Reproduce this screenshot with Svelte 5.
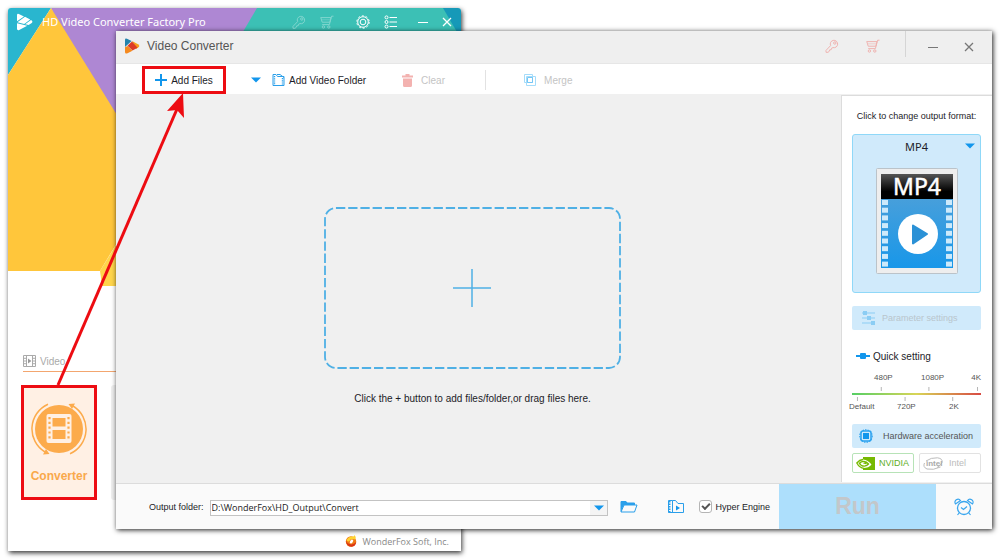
<script>
	let outputFolder = 'D:\\WonderFox\\HD_Output\\Convert'
	let hyperEngine = true

	const perforations = [0, 1, 2, 3, 4, 5, 6, 7, 8]
	const upperMarks = ['480P', '1080P', '4K']
	const lowerMarks = ['Default', '720P', '2K']
</script>

{#snippet keyIcon()}
	<svg class="icon" width="14" height="14" viewBox="0 0 14 14">
		<path d="M5.6 6.6A3.7 3.7 0 1 1 8 8.6L6.6 9.2 6.2 10.7 4.6 10.9 4.2 12.4 3 13.3 1 13.3 1 11.4Z" />
		<circle cx="9.8" cy="4" r="1.2" />
	</svg>
{/snippet}

{#snippet cartIcon()}
	<svg class="icon" width="14" height="14" viewBox="0 0 14 14">
		<path d="M13.5 1.2H11.6L9.4 9.6H2.2M.6 2.6H11L9.9 7.2H2.2L.8 2.6" />
		<path d="M2 4.8H10.4" stroke-width=".6" />
		<circle cx="3.4" cy="12" r="1.2" />
		<circle cx="8.8" cy="12" r="1.2" />
	</svg>
{/snippet}

{#snippet closeIcon()}
	<svg class="icon" width="10" height="10" viewBox="0 0 10 10"><path stroke-width="1.3" d="M1 1 9 9M9 1 1 9" /></svg>
{/snippet}

{#snippet minimizeIcon()}
	<svg class="icon" width="10" height="10" viewBox="0 0 10 10"><path d="M0 5.5H10" /></svg>
{/snippet}

{#snippet downArrow()}
	<svg class="arrow" width="10" height="6" viewBox="0 0 10 6"><path d="M0 .5H10L5 5.5Z" /></svg>
{/snippet}

<div class="desktop">
	<section class="launcher">
		<div class="hero">
			<svg class="heroArt" viewBox="0 0 453 278" preserveAspectRatio="xMinYMin slice">
				<path fill="#ae87d3" d="M43 0H250L130 200Z" />
				<path fill="#3cc0b5" d="M249 0H436L453 29V278H150L110 235Z" />
				<path fill="#1699b8" d="M435 0H453V31Z" />
				<path fill="#29b6cf" d="M0 0H43L0 67Z" />
				<path fill="#ffd54b" d="M92 263 108 237H220V278H94Z" />
				<path fill="#ffc63b" d="M43 0 0 67V263H92L130 200 146 167Z" />
			</svg>
			<header class="launcherBar">
				<svg width="18" height="18" viewBox="0 0 18 18">
					<path fill="#fff" d="M1 2.2Q1 .4 2.8 1L8 3.4 1 8.2ZM9 3.8 14.2 6.4 8.2 11 1.4 9.2ZM15 6.9Q17.6 8.4 15.4 10.2L12.6 12 9.2 11.2ZM1 10.2 11.2 12.8 3.2 17Q1 17.8 1 15.8Z" />
				</svg>
				<h1>HD Video Converter Factory Pro</h1>
				<button class="iconButton faint" aria-label="Register">{@render keyIcon()}</button>
				<button class="iconButton faint" aria-label="Shop">{@render cartIcon()}</button>
				<button class="iconButton gear" aria-label="Settings">
					<svg class="icon" width="14" height="14" viewBox="0 0 14 14">
						<circle cx="7" cy="7" r="5.3" />
						<circle cx="7" cy="7" r="6.2" stroke-dasharray="2 1.9" />
						<circle cx="7" cy="7" r="2.8" />
					</svg>
				</button>
				<button class="iconButton" aria-label="Menu">
					<svg class="icon" width="14" height="14" viewBox="0 0 14 14">
						<circle cx="2.5" cy="2.4" r="1.5" /><circle cx="2.5" cy="7" r="1.5" /><circle cx="2.5" cy="11.6" r="1.5" />
						<path d="M5.5 2.5H13M5.5 7H13M5.5 11.5H13" />
					</svg>
				</button>
				<button class="iconButton minimize" aria-label="Minimize">{@render minimizeIcon()}</button>
				<button class="iconButton" aria-label="Close">{@render closeIcon()}</button>
			</header>
		</div>

		<div class="category">
			<svg width="13" height="12" viewBox="0 0 13 12" fill="none" stroke="#aaa">
				<path d="M.5 .5H12.5V11.5H.5ZM3.5 .5V11.5M9.5 .5V11.5M.5 3.3H3.5M.5 6H3.5M.5 8.7H3.5M9.5 3.3H12.5M9.5 6H12.5M9.5 8.7H12.5" />
				<path fill="#999" stroke="none" d="M5 3.6 8.4 6 5 8.4Z" />
			</svg>
			<h2>Video</h2>
		</div>

		<div class="tools">
			<button class="tool active">
				<svg width="56" height="52" viewBox="0 0 56 52">
					<circle cx="28" cy="26" r="24" fill="#fcab4c" />
					<path fill="none" stroke="#fcab4c" stroke-width="1.5" d="M17 1.2A27 27 0 0 0 14 49M39 50.8A27 27 0 0 0 42 3" />
					<path fill="#fcab4c" d="M12 51.5 18.5 51 15 46ZM44 .5 37.5 1 41 6Z" />
					<rect x="15.5" y="11" width="25" height="29" rx="2" fill="#fff0e4" />
					<path fill="#fcab4c" d="M21.5 15H34.5V23.5H21.5ZM21.5 27H34.5V36H21.5Z" />
					<path stroke="#fcab4c" stroke-width="2.2" stroke-dasharray="2.2 2.6" d="M18.5 14V38M37.5 14V38" />
				</svg>
				<span>Converter</span>
			</button>
			<button class="tool" aria-label="Downloader"></button>
		</div>

		<footer class="company">
			<svg width="12" height="12" viewBox="0 0 12 12">
				<circle cx="6" cy="6.5" r="5.2" fill="#f07a13" />
				<path fill="#d93616" d="M1 5Q1 11.6 6.5 11.7 10.5 11.5 11.3 7 8 10.5 4.5 9 1.5 8 1 5Z" />
				<path fill="#ffd331" d="M1.5 5Q4 1 7.500 1.500 9.500 1.500 9.500 0 12 3.500 9.500 4.500 6 3 4 6.500 2 6.500 1.500 5Z" />
				<ellipse cx="6.5" cy="6.5" rx="1.4" ry="2.2" fill="#fff" transform="rotate(35 6.5 6.5)" />
			</svg>
			WonderFox Soft, Inc.
		</footer>
	</section>

	<section class="converter">
		<header class="titleBar">
			<svg width="16" height="16" viewBox="0 0 16 16">
				<path fill="#2383ad" d="M1 2Q1 0 3 .8L7.6 3 1 9Z" />
				<path fill="#f6a01c" d="M8 3 14 6.2Q16.5 8 14.2 9.6L12 11Z" />
				<path fill="#dc3b26" d="M8 3.6 13.5 9.8 8.5 12.5 3.5 7.8Z" />
				<path fill="#f58a1f" d="M1 9.2 3.6 8 8.5 12.8 3 15.4Q1 16 1 14Z" />
			</svg>
			<h1>Video Converter</h1>
			<button class="iconButton pink" aria-label="Register">{@render keyIcon()}</button>
			<button class="iconButton pink shop" aria-label="Shop">{@render cartIcon()}</button>
			<div class="controls">
				<button class="iconButton" aria-label="Minimize">{@render minimizeIcon()}</button>
				<button class="iconButton" aria-label="Close">{@render closeIcon()}</button>
			</div>
		</header>

		<nav class="toolbar">
			<button class="addFiles">
				<svg width="12" height="12" viewBox="0 0 12 12"><path stroke="#1296ec" stroke-width="2" d="M6 0V12M0 6H12" /></svg>
				Add Files
			</button>
			<button class="iconButton more" aria-label="More ways to add">{@render downArrow()}</button>
			<button>
				<svg width="13" height="14" viewBox="0 0 13 14" fill="none" stroke="#2a9fea">
					<path d="M1 1.5H4L5.5 3.5H12V12.5H1ZM5 1.5H8L12 4.500" />
					<path d="M2.5 3V12.5M10.500 5V12.500" stroke-width="1.4" stroke-dasharray="1.2 1" />
				</svg>
				Add Video Folder
			</button>
			<button class="clear" disabled>
				<svg width="11" height="13" viewBox="0 0 11 13" fill="#f3b2b0"><path d="M3.5 0H7.5V1.5H11V3.5H0V1.5H3.5ZM1 4.5H10V11.5Q10 13 8.5 13H2.5Q1 13 1 11.5Z" /></svg>
				Clear
			</button>
			<button class="merge" disabled>
				<svg width="12" height="12" viewBox="0 0 12 12" fill="none" stroke="#a5dcfa">
					<path d="M.5 .5H8.5V8.5H.5ZM2.5 2.5H11.5V11.5H2.5Z" />
					<path stroke="#75c6f5" d="M3.5 3.5H8.5V8.5H3.5Z" />
				</svg>
				Merge
			</button>
		</nav>

		<div class="workspace">
			<main>
				<button class="dropZone" aria-label="Add files or folder">
					<svg width="297" height="162" viewBox="0 0 297 162" fill="none" stroke="#4fb0e5">
						<rect x="1" y="1" width="295" height="160" rx="11" stroke-width="1.8" stroke-dasharray="9.3 2.9" />
						<path stroke-width="1.5" d="M129 81H167M148 62V100" />
					</svg>
				</button>
				<p>Click the + button to add files/folder,or drag files here.</p>
			</main>

			<aside>
				<p>Click to change output format:</p>
				<button class="format">
					<span class="formatName">MP4 {@render downArrow()}</span>
					<svg width="82" height="106" viewBox="0 0 82 106">
						<defs>
							<linearGradient id="label" x2="0" y2="1"><stop stop-color="#555" /><stop offset=".7" stop-color="#000" /></linearGradient>
							<linearGradient id="film" x2="0" y2="1"><stop stop-color="#479fdb" /><stop offset="1" stop-color="#1897e9" /></linearGradient>
						</defs>
						<rect x=".5" y=".5" width="81" height="105" rx="1" fill="#eee" stroke="#bbc3c9" />
						<rect x="5" y="6" width="72" height="25" fill="url(#label)" />
						<rect x="5" y="31" width="72" height="69" fill="url(#film)" />
						{#each perforations as i}
							<rect x="6" y={32 + i * 7.7} width="6" height="5" fill="#cdeafb" />
							<rect x="70" y={32 + i * 7.7} width="6" height="5" fill="#cdeafb" />
						{/each}
						<text x="41" y="27" text-anchor="middle" class="formatArt">MP4</text>
						<circle cx="42" cy="66" r="20" fill="#fff" />
						<path d="M37 57.5 51 66 37 75.5Z" fill="#2b91d6" stroke="#2b91d6" stroke-width="2" stroke-linejoin="round" />
					</svg>
				</button>

				<button class="wide parameters" disabled>
					<svg width="14" height="14" viewBox="0 0 14 14" fill="#8bcdf4" stroke="#8bcdf4">
						<path d="M0 2H13M0 7H13M0 12H13" /><path stroke="none" d="M1 0H5V4H1ZM5 5H9V9H5ZM9 10H13V14H9Z" />
					</svg>
					Parameter settings
				</button>

				<h2>
					<svg width="14" height="6" viewBox="0 0 14 6" fill="#1296ec"><path d="M0 2H14V4H0Z" /><rect x="4" width="6" height="6" rx="1" /></svg>
					Quick setting
				</h2>
				<div class="scale">
					<div class="marks upper">
						{#each upperMarks as mark}<span>{mark}</span>{/each}
					</div>
					<svg width="100%" height="14" viewBox="0 0 130 14" preserveAspectRatio="none">
						<defs>
							<linearGradient id="quality"><stop stop-color="#55cf65" /><stop offset=".5" stop-color="#d8d557" /><stop offset="1" stop-color="#d84a43" /></linearGradient>
						</defs>
						<rect y="6" width="130" height="2" fill="url(#quality)" />
						<path stroke="#b5b5b5" d="M29.5 0V4M77.5 0V4M126.5 0V4M5.5 10V14M53.5 10V14M101.5 10V14" />
					</svg>
					<div class="marks lower">
						{#each lowerMarks as mark}<span>{mark}</span>{/each}
					</div>
				</div>

				<button class="wide">
					<svg width="14" height="14" viewBox="0 0 14 14" fill="none" stroke="#2da3ef">
						<rect x="2" y="2" width="10" height="10" rx="2" stroke-width="1.5" />
						<circle cx="7" cy="7" r="6.2" stroke-width="1.2" stroke-dasharray="1.5 1" />
						<rect x="4" y="4" width="6" height="6" fill="#1296ec" stroke="none" />
					</svg>
					Hardware acceleration
				</button>
				<div class="vendors">
					<button class="vendor nvidia">
						<svg width="19" height="13" viewBox="0 0 19 13">
							<path fill="#76b900" d="M7 0H19V13H7V11Q13 11 15.5 7.5 12 3 7 2.5Z" />
							<path fill="none" stroke="#76b900" stroke-width="1.3" d="M7 2.5Q3.5 2.8 .8 6 3.5 11 8 11.3M8 4.4Q5.2 4.3 3.4 6.3 5.3 9.3 8.5 9.1 11 8.8 12.5 7 10.5 4.7 8 4.4ZM7.5 6.3Q9.5 5.5 10.2 7" />
						</svg>
						NVIDIA
					</button>
					<button class="vendor intel" disabled>
						<svg width="20" height="13" viewBox="0 0 20 13">
							<path fill="none" stroke="#bbb" d="M3 4Q8 .4 14.5 .8 20 1.6 19 5.5 18 8.5 14 10.5M17.5 10Q10 13.5 4 12 -.5 10 1.5 6" />
							<text x="3" y="9" class="intelArt">intel</text>
						</svg>
						Intel
					</button>
				</div>
			</aside>
		</div>

		<footer class="output">
			<label for="outputFolder">Output folder:</label>
			<div class="combo">
				<input id="outputFolder" type="text" bind:value={outputFolder} />
				<button class="iconButton" aria-label="Recent folders">{@render downArrow()}</button>
			</div>
			<button class="iconButton" aria-label="Choose output folder">
				<svg width="18" height="13" viewBox="0 0 18 13" fill="none" stroke="#2a9fea">
					<path d="M1 11.5V1.5H5.5L7 3H14.5V5M1 12 4 5H17L14.5 12Z" />
					<path d="M1 1H6L7.5 3H15V5H4L1 11Z" fill="#2a9fea" stroke="none" />
				</svg>
			</button>
			<button class="iconButton results" aria-label="Open output folder">
				<svg width="18" height="13" viewBox="0 0 18 13" fill="none" stroke="#2a9fea">
					<path d="M5.5 12.5V.5H1.500V12.5H16.5V3.5H11L8.500 .5H5.5" />
					<path d="M2.5 1V13" stroke-width="2" stroke-dasharray="1.5 1" />
					<path d="M9 5.5 13 8 9 10.500Z" fill="#1296ec" stroke="none" />
				</svg>
			</button>
			<label class="hyper">
				<input type="checkbox" bind:checked={hyperEngine} />
				Hyper Engine
			</label>
			<button class="run" disabled>Run</button>
			<button class="schedule" aria-label="Schedule">
				<svg width="20" height="18" viewBox="0 0 20 18" fill="none" stroke="#3aa6ee">
					<circle cx="10" cy="10" r="6.5" stroke-width="1.3" />
					<path stroke-width="1.2" d="M1.5 6A3 3 0 1 1 6.5 2.5ZM18.5 6A3 3 0 1 0 13.5 2.5ZM5.5 14.5 3.5 17M14.5 14.5 16.5 17M7 9.5 9.5 11.5 13 8.5" />
				</svg>
			</button>
		</footer>
	</section>

	<svg class="pointer" width="150" height="300" viewBox="0 0 150 300">
		<path d="M17 292 136 16" stroke="#ed0c12" stroke-width="3" />
		<path d="M142 0 143 25 136 17 126 18Z" fill="#ed0c12" />
	</svg>
</div>

<style>
	:global(body) {
		background-color: #fff;
		font-family: "Liberation Sans", Arial, sans-serif;
		font-size: 10px;
		color: #1c1c28;
	}
	h1, h2, p {
		margin: 0;
		font-weight: normal;
	}
	button {
		display: flex;
		align-items: center;
		padding: 0;
		border: 0;
		background: none;
		color: inherit;
		font: inherit;
		white-space: nowrap;
	}
	svg {
		display: block;
		flex: none;
	}
	.icon {
		fill: none;
		stroke: currentColor;
	}
	.arrow {
		fill: #1296ec;
	}
	.iconButton {
		justify-content: center;
	}
	.desktop {
		position: relative;
		min-height: 100vh;
		overflow: hidden;
	}

	/* launcher window */
	.launcher {
		position: absolute;
		top: 8px;
		left: 8px;
		width: 45.3%;
		background-color: #fff;
		border-radius: 3px 3px 0 0;
		box-shadow: 1px 2px 5px rgba(0, 0, 0, 0.8);
	}
	.hero {
		display: grid;
		height: 278px;
		overflow: hidden;
		border-radius: 3px 3px 0 0;
	}
	.heroArt {
		grid-area: 1 / 1;
		width: 100%;
		height: 278px;
	}
	.launcherBar {
		grid-area: 1 / 1;
		z-index: 1;
		display: flex;
		align-items: center;
		height: 28px;
		padding-left: 8px;
		color: #fff;
	}
	.launcherBar h1 {
		flex: 1;
		margin-left: 8px;
		font-family: "Noto Sans", sans-serif;
		font-size: 11px;
		line-height: 16px;
	}
	.launcherBar .iconButton {
		width: 28px;
	}
	.launcherBar .faint {
		opacity: 0.35;
	}
	.launcherBar .gear {
		margin-left: 8px;
	}
	.launcherBar .minimize {
		width: 20px;
		margin-left: 8px;
	}
	.category {
		display: flex;
		align-items: center;
		gap: 4px;
		height: 20px;
		margin: 65px 15px 0;
		border-bottom: 1px solid #f3a66f;
		color: #aaa;
	}
	.category h2 {
		font-size: 10px;
	}
	.tools {
		display: flex;
		gap: 14px;
		padding: 13px 13px 12px;
	}
	.tool {
		flex-direction: column;
		width: 76px;
		height: 115px;
		padding-top: 15px;
		gap: 14px;
		border-radius: 3px;
		background-color: #efefef;
		box-sizing: border-box;
	}
	.tool.active {
		border: 3px solid #ed0c12;
		border-radius: 0;
		background-color: #fff0e4;
		color: #f9a94c;
		font-size: 12px;
		font-weight: bold;
	}
	.company {
		display: flex;
		align-items: center;
		justify-content: flex-end;
		gap: 5px;
		height: 20px;
		padding: 19px 12px 0 0;
		color: #888;
		font-family: "Open Sans", sans-serif;
		font-size: 9px;
	}

	/* converter window */
	.converter {
		position: absolute;
		top: 31px;
		left: 116px;
		right: 8px;
		background-color: #f0f0f0;
		box-shadow: 1px 1px 5px rgba(0, 0, 0, 0.9);
	}
	.titleBar {
		display: flex;
		align-items: center;
		height: 30px;
		padding: 0 13px 2px 8px;
		border-bottom: 1px solid #e6e6e6;
		background-color: #efefef;
		color: #555;
	}
	.titleBar h1 {
		flex: 1;
		margin-left: 7px;
		font-size: 12px;
	}
	.titleBar .pink {
		color: #efb3b0;
	}
	.titleBar .shop {
		margin: 0 25px 0 27px;
	}
	.controls {
		display: flex;
		gap: 26px;
		height: 20px;
		padding: 6px 5px 0 22px;
		border-left: 1px solid #d5d5d5;
		align-self: flex-start;
		color: #777;
	}
	.toolbar {
		display: flex;
		align-items: center;
		height: 28px;
		padding: 2px 0 0 26px;
		background-color: #fff;
	}
	.toolbar button {
		gap: 4px;
		height: 20px;
	}
	.toolbar .addFiles {
		justify-content: center;
		width: 84px;
		height: 28px;
		border: 3px solid #ed0c12;
		box-sizing: border-box;
	}
	.toolbar .more {
		width: 46px;
		padding-left: 14px;
		box-sizing: border-box;
	}
	.toolbar button:disabled {
		gap: 8px;
		color: #c4c4c4;
	}
	.toolbar .clear {
		width: 84px;
		margin-left: 36px;
		border-right: 1px solid #e2e2e2;
	}
	.toolbar .merge {
		gap: 5px;
		margin-left: 38px;
	}
	.workspace {
		display: grid;
		grid-template-columns: 1fr 151px;
		border-bottom: 1px solid #dcdcdc;
	}
	main {
		display: flex;
		flex-direction: column;
		align-items: center;
		gap: 24px;
		padding: 113px 12px 0 0;
	}
	aside {
		display: flex;
		flex-direction: column;
		height: 387px;
		margin: 1px 0;
		padding: 14px 11px 0 10px;
		border: 1px solid #dcdcdc;
		border-width: 1px 0 0 1px;
		background-color: #fff;
		box-sizing: border-box;
	}
	aside p {
		font-size: 9px;
		text-align: center;
		line-height: 12px;
		white-space: nowrap;
	}
	.format {
		flex-direction: column;
		height: 159px;
		margin-top: 12px;
		border: 1px solid #8fd8f8;
		border-radius: 3px;
		background-color: #d0eafb;
		box-sizing: border-box;
	}
	.formatName {
		display: grid;
		grid-template-columns: 1fr auto 1fr;
		align-items: center;
		width: 100%;
		height: 22px;
		margin-bottom: 11px;
		padding: 0 5px;
		box-sizing: border-box;
		font-family: "Noto Sans", sans-serif;
		font-size: 11px;
	}
	.formatName::before {
		content: "";
	}
	.formatName .arrow {
		justify-self: end;
	}
	.formatArt {
		fill: #fff;
		stroke: #fff;
		stroke-width: 0.5px;
		font-family: "Noto Sans", sans-serif;
		font-size: 23px;
	}
	.wide {
		gap: 10px;
		height: 24px;
		padding-left: 7px;
		border-radius: 2px;
		background-color: #d0eafb;
		color: #555;
		font-size: 9px;
	}
	.parameters {
		margin-top: 13px;
		padding-left: 10px;
		gap: 6px;
		color: #b9c5cc;
	}
	aside h2 {
		display: flex;
		align-items: center;
		gap: 3px;
		height: 12px;
		margin: 20px 0 11px 4px;
		font-size: 10px;
	}
	.scale {
		margin-bottom: 12px;
		color: #555;
		font-size: 8px;
		line-height: 10px;
	}
	.marks {
		display: grid;
	}
	.upper {
		margin: 0 0 4px 22px;
		grid-template-columns: 47px 1fr auto;
	}
	.lower {
		margin: 1px 0 0 -3px;
		grid-template-columns: 48px 52px 1fr;
	}
	.vendors {
		display: grid;
		grid-template-columns: 1fr 1fr;
		gap: 5px;
		margin-top: 5px;
	}
	.vendor {
		gap: 4px;
		height: 20px;
		padding-left: 3px;
		border: 1px solid #e2e2e2;
		border-radius: 2px;
		font-size: 9px;
	}
	.nvidia {
		border-color: #b7e3b7;
		color: #5fae1f;
	}
	.intel {
		gap: 6px;
		color: #bbb;
	}
	.intelArt {
		fill: #aaa;
		font-size: 8px;
		font-weight: bold;
	}
	.output {
		display: flex;
		align-items: center;
		height: 45px;
		padding-left: 33px;
		background-color: #fafafa;
	}
	.output label {
		font-size: 9px;
	}
	.combo {
		display: flex;
		flex: 1;
		height: 16px;
		margin: 2px 12px 0 6px;
		border: 1px solid #c3c3c3;
		background-color: #fff;
		box-sizing: border-box;
	}
	.combo input {
		flex: 1;
		min-width: 0;
		padding: 0 1px;
		border: 0;
		background: none;
		color: #222;
		font-family: "Open Sans", sans-serif;
		font-size: 9px;
		line-height: 12px;
	}
	.combo .iconButton {
		width: 17px;
		background-color: #f4f4f4;
	}
	.results {
		margin: 0 14px 0 29px;
	}
	.hyper {
		display: flex;
		align-items: center;
		gap: 3px;
		margin-right: 9px;
	}
	.hyper input {
		appearance: none;
		display: grid;
		place-items: center;
		width: 13px;
		height: 13px;
		margin: 0;
		border: 1px solid #b5b5b5;
		border-radius: 3px;
		background-color: #fff;
	}
	.hyper input:checked::before {
		content: "";
		width: 8px;
		height: 5px;
		margin-bottom: 2px;
		border: solid #555;
		border-width: 0 0 2px 2px;
		box-sizing: border-box;
		transform: rotate(-45deg);
	}
	.run {
		justify-content: center;
		width: 157px;
		height: 45px;
		background-color: #addffc;
		color: #c3c7ca;
		font-size: 23px;
		font-weight: bold;
	}
	.schedule {
		justify-content: center;
		width: 56px;
	}

	/* arrow from the Converter tile to Add Files */
	.pointer {
		position: absolute;
		top: 93px;
		left: 41px;
	}
</style>
